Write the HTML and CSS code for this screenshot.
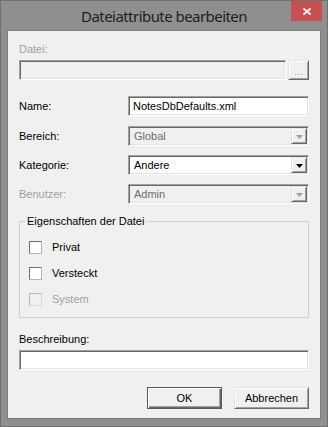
FILE: index.html
```html
<!DOCTYPE html>
<html lang="de">
<head>
<meta charset="utf-8">
<title>Dateiattribute bearbeiten</title>
<link rel="stylesheet" href="styles.css">
</head>
<body>
<div class="window">
  <div class="titlebar">
    <span class="tb-spacer"></span>
    <div class="title">Dateiattribute bearbeiten</div>
    <div class="tb-end">
      <div class="close">
        <svg width="8" height="7" viewBox="0 0 8 7"><path d="M0.5 0.5 L7.5 6.5 M7.5 0.5 L0.5 6.5" stroke="#fff" stroke-width="1.7" fill="none"/></svg>
      </div>
    </div>
  </div>
  <div class="client">
    <div class="label disabled label-top">Datei:</div>
    <div class="file-row">
      <div class="field sunken field-disabled"></div>
      <div class="btn raised browse">...</div>
    </div>

    <div class="form">
      <div class="row">
        <span class="row-label">Name:</span>
        <div class="field sunken field-white"><span class="value">NotesDbDefaults.xml</span></div>
      </div>
      <div class="row row-gap-10">
        <span class="row-label">Bereich:</span>
        <div class="field sunken field-disabled combo">
          <span class="value value-disabled">Global</span>
          <span class="arrow raised"><svg width="7" height="4" viewBox="0 0 7 4"><polygon points="0,0 7,0 3.5,4" fill="#a0a0a0"/></svg></span>
        </div>
      </div>
      <div class="row">
        <span class="row-label">Kategorie:</span>
        <div class="field sunken field-white combo">
          <span class="value">Andere</span>
          <span class="arrow raised"><svg width="7" height="4" viewBox="0 0 7 4"><polygon points="0,0 7,0 3.5,4" fill="#000"/></svg></span>
        </div>
      </div>
      <div class="row">
        <span class="row-label disabled">Benutzer:</span>
        <div class="field sunken field-disabled combo">
          <span class="value value-disabled">Admin</span>
          <span class="arrow raised"><svg width="7" height="4" viewBox="0 0 7 4"><polygon points="0,0 7,0 3.5,4" fill="#a0a0a0"/></svg></span>
        </div>
      </div>
    </div>

    <fieldset class="group">
      <legend>Eigenschaften der Datei</legend>
      <div class="check"><span class="box"></span><span>Privat</span></div>
      <div class="check"><span class="box"></span><span>Versteckt</span></div>
      <div class="check check-disabled"><span class="box"></span><span>System</span></div>
    </fieldset>

    <div class="label label-desc">Beschreibung:</div>
    <div class="field sunken field-white"></div>

    <div class="buttons">
      <div class="btn raised push default">OK</div>
      <div class="btn raised push">Abbrechen</div>
    </div>
  </div>
</div>
</body>
</html>
```
FILE: styles.css
```css
* { box-sizing: border-box; }
html, body { margin: 0; padding: 0; }
body {
  width: 328px;
  height: 427px;
  overflow: hidden;
  font-family: "Liberation Sans", Arial, sans-serif;
  font-size: 11px;
  color: #000;
}
.window {
  width: 328px;
  height: 427px;
  background: #8f8f8f;
  border: 1px solid #6f6f6f;
  display: flex;
  flex-direction: column;
}
.titlebar {
  height: 29px;
  display: grid;
  grid-template-columns: 1fr auto 1fr;
  align-items: start;
}
.title {
  font-family: "Noto Sans", "Open Sans", sans-serif;
  font-size: 15px;
  letter-spacing: -0.55px;
  line-height: 20px;
  padding-top: 5px;
  color: #1e1e1e;
  white-space: nowrap;
}
.tb-end {
  display: flex;
  justify-content: flex-end;
  padding-right: 5px;
}
.close {
  width: 31px;
  height: 20px;
  background: #c75050;
  display: flex;
  align-items: center;
  justify-content: center;
}
.close svg { display: block; }

.client {
  margin: 0 6px 0 6px;
  height: 389px;
  border: 1px solid #7d7d7d;
  background: #f0f0f0;
  padding: 12px 11px 8px 11px;
  display: flex;
  flex-direction: column;
}
.label { line-height: 13px; height: 13px; }
.disabled { color: #a0a0a0; }
.label-top { margin-bottom: 4px; }
.file-row {
  display: flex;
  gap: 2px;
  height: 20px;
}
.file-row .field { flex: 1; }

.field {
  height: 20px;
  display: flex;
  align-items: center;
}
.sunken {
  border: 1px solid;
  border-color: #a0a0a0 #fff #fff #a0a0a0;
  box-shadow: inset 1px 1px 0 #696969, inset -1px -1px 0 #e3e3e3;
}
.field-white { background: #fff; }
.field-disabled { background: #f0f0f0; }
.value {
  padding-left: 4px;
  flex: 1;
  line-height: 13px;
  white-space: nowrap;
}
.value-disabled { color: #6d6d6d; }

.raised {
  border: 1px solid;
  border-color: #e3e3e3 #696969 #696969 #e3e3e3;
  box-shadow: inset 1px 1px 0 #fff, inset -1px -1px 0 #a0a0a0;
  background: #f0f0f0;
}
.browse {
  width: 21px;
  height: 20px;
  color: #a0a0a0;
  text-shadow: 1px 1px 0 #fff;
  display: flex;
  align-items: center;
  justify-content: center;
  line-height: 13px;
  padding-top: 2px;
  font-size: 11px;
}

.form {
  margin-top: 16px;
  display: flex;
  flex-direction: column;
  gap: 9px;
}
.row {
  display: grid;
  grid-template-columns: 109px 1fr;
  align-items: center;
  height: 20px;
}
.row-gap-10 { margin-top: 1px; }
.row-label { line-height: 13px; }
.combo { padding: 1px; }
.combo .arrow {
  width: 16px;
  height: 16px;
  display: flex;
  align-items: center;
  justify-content: center;
  padding-top: 1px;
}
.combo .arrow svg { display: block; }

.group {
  margin: 11px 0 0 0;
  padding: 13px 9px 11px 9px;
  border: 1px solid #d0d0d0;
  display: flex;
  flex-direction: column;
  gap: 13px;
  min-width: 0;
}
.group legend {
  padding: 0 2px;
  margin-left: -4px;
  line-height: 13px;
}
.check {
  display: flex;
  align-items: center;
  height: 13px;
  line-height: 13px;
}
.box {
  width: 13px;
  height: 13px;
  background: #fff;
  border: 1px solid;
  border-color: #707070 #b5b5b5 #b5b5b5 #707070;
  margin-right: 10px;
  flex: none;
}
.check-disabled { color: #a0a0a0; }
.check-disabled .box {
  background: #f0f0f0;
  border-color: #b9b9b9 #d8d8d8 #d8d8d8 #b9b9b9;
}

.label-desc { margin-top: 15px; margin-bottom: 4px; }

.buttons {
  margin-top: 17px;
  display: flex;
  justify-content: flex-end;
  gap: 12px;
}
.push {
  width: 75px;
  height: 22px;
  display: flex;
  align-items: center;
  justify-content: center;
  line-height: 13px;
}
.default {
  border-color: #5a5a5a;
  box-shadow: inset 1px 1px 0 #fff, inset -1px -1px 0 #696969, inset -2px -2px 0 #a0a0a0;
}
```
